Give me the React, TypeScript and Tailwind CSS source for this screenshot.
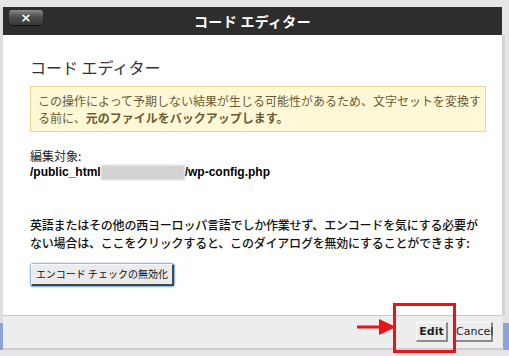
const jp = '"Noto Sans CJK JP", "Liberation Sans", sans-serif';

function CloseButton() {
  return (
    <button className="w-[34px] h-[15px] mt-[3px] ml-[6px] rounded-[3px] bg-gradient-to-b from-[#8a8a8a] via-[#4a4a4a] to-[#3a3a3a] shadow-[0_1px_1px_rgba(0,0,0,0.6)] flex items-center justify-center">
      <span className="text-white text-[13px] font-bold leading-none" style={{ fontFamily: '"DejaVu Sans", sans-serif' }}>
        ×
      </span>
    </button>
  );
}

export default function App() {
  return (
    <div className="relative w-[509px] h-[356px] overflow-hidden bg-[#e6e4e6]" style={{ fontFamily: jp }}>
      <div className="flex pt-[7px]">
        {/* page edge on the left */}
        <div className="w-[3px] flex flex-col">
          <div className="h-[316px] bg-[#dedcde]" />
          <div className="h-[27px] bg-[#8ea4d8]" />
        </div>

        {/* dialog */}
        <div className="w-[499px] flex flex-col">
          <div className="h-[28px] bg-[#2e2d2e] relative flex items-start">
            <CloseButton />
            <div className="absolute inset-0 flex items-center justify-center text-white text-[14px] font-bold tracking-[0.3px]">
              コード エディター
            </div>
          </div>

          <div className="h-[280px] bg-white pl-[27px] pr-[16px] pt-[21px]">
            <h2 className="text-[16px] leading-[22px] text-[#333] font-normal">コード エディター</h2>
            <div className="mt-[8px] border border-[#e6d68e] bg-[#fff8d6] pl-[7px] pt-[5px] pb-[5px] text-[12px] leading-[17px] text-[#6b5b33]">
              <div>この操作によって予期しない結果が生じる可能性があるため、文字セットを変換す</div>
              <div>
                る前に、<b className="font-bold">元のファイルをバックアップします。</b>
              </div>
            </div>

            <div className="mt-[16px] text-[12px] leading-[16px] text-[#222]">編集対象:</div>
            <div className="flex items-center h-[16px] text-[12px] font-bold text-black" style={{ fontFamily: '"Liberation Sans", Arial, sans-serif' }}>
              <span>/public_html</span>
              <span className="w-[84px] h-[15px] bg-[#d2d2d2] blur-[1px]" />
              <span>/wp-config.php</span>
            </div>

            <p className="mt-[36px] text-[12px] leading-[18px] font-medium text-[#111] tracking-[-0.2px]">
              英語またはその他の西ヨーロッパ言語でしか作業せず、エンコードを気にする必要がない場合は、ここをクリックすると、このダイアログを無効にすることができます:
            </p>

            <button className="mt-[11px] rounded-[4px] p-[1px] bg-[#8fbcf2] shadow-[0_0_2px_#8fbcf2]">
              <span className="block w-[143px] h-[22px] bg-[#ebebeb] border border-[#f8f8f8] border-r-[#444] border-b-[#444] border-r-2 border-b-2 text-[10px] leading-[18px] text-[#111] whitespace-nowrap">
                エンコード チェックの無効化
              </span>
            </button>
          </div>

          <div className="h-[35px] bg-[#eeedee] border-t border-[#c6c6c6] border-b-2 border-b-[#cfcdcf] flex items-center justify-end pr-[9px] gap-[7px]">
            <button
              className="w-[32px] h-[20px] bg-[#ececec] border border-[#fafafa] border-r-[#8a8a8a] border-b-[#8a8a8a] border-r-2 border-b-2 text-[11px] font-bold text-[#222] leading-none"
              style={{ fontFamily: '"DejaVu Sans", Verdana, sans-serif' }}
            >
              Edit
            </button>
            <button
              className="w-[38px] h-[20px] bg-[#ececec] border border-[#fafafa] border-r-[#8a8a8a] border-b-[#8a8a8a] border-r-2 border-b-2 text-[11px] text-[#222] leading-none"
              style={{ fontFamily: '"DejaVu Sans", Verdana, sans-serif' }}
            >
              Cancel
            </button>
          </div>
        </div>

        {/* page edge on the right */}
        <div className="w-[7px] flex flex-col">
          <div className="h-[28px]" />
          <div className="h-[280px] flex">
            <div className="w-[3px] bg-[#d3d2d3]" />
          </div>
          <div className="h-[8px]" />
          <div className="h-[27px] ml-[1px] bg-[#8ea4d8]" />
        </div>
      </div>

      {/* annotation: red highlight box and arrow */}
      <div className="absolute left-[393px] top-[303px] w-[63px] h-[50px] border-[3px] border-[#e8141c]" />
      <svg className="absolute left-[357px] top-[319px]" width="40" height="16" viewBox="0 0 40 16">
        <rect x="0" y="6.5" width="24" height="3" fill="#e8141c" />
        <polygon points="22,0 39,8 22,16" fill="#e8141c" />
      </svg>
    </div>
  );
}
